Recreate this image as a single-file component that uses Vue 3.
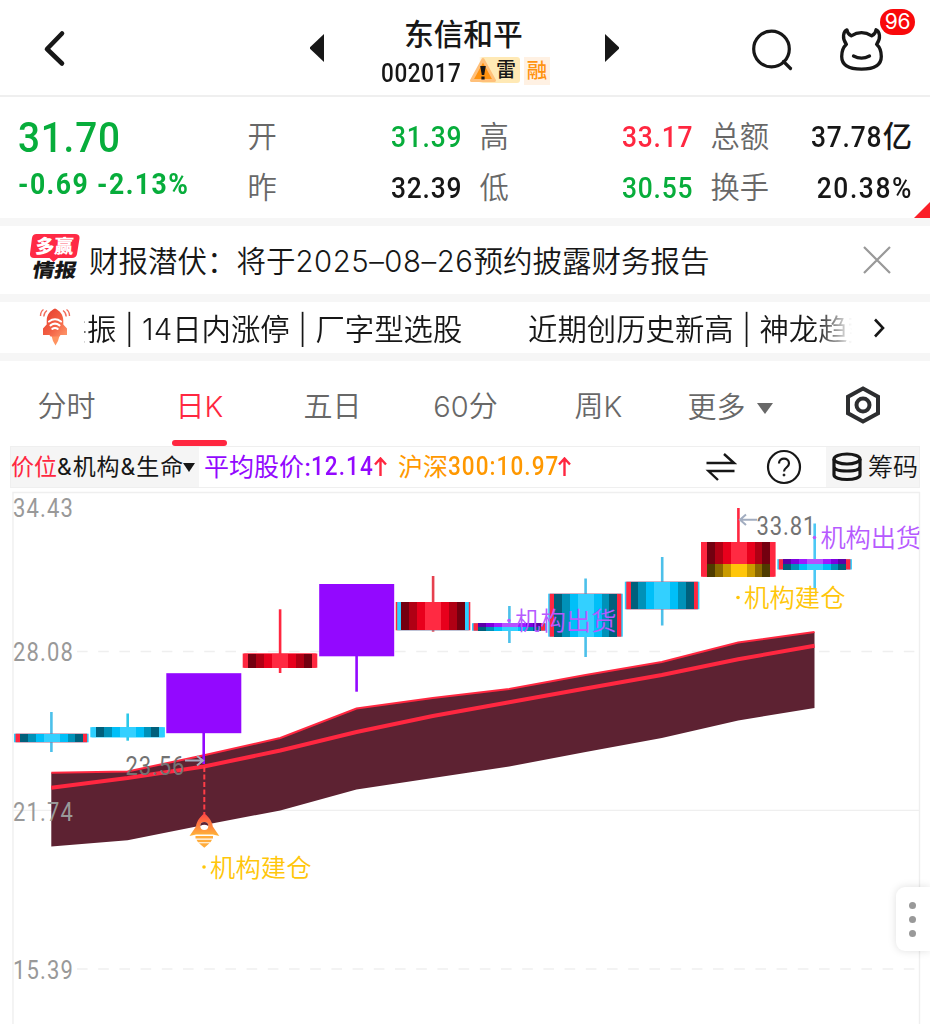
<script setup>
const periods = [
  { label: '分时' },
  { label: '日K', active: true },
  { label: '五日' },
  { label: '60分' },
  { label: '周K' },
]

const palettes = {
  blue: ['#00607c', '#0091b8', '#00bff8', '#33d0ff'],
  red: ['#730010', '#b00014', '#e8001c', '#ff2a42'],
  violet: ['#5c00a8', '#7e00e0', '#9d1cff', '#b650ff'],
  gold: ['#4e3b00', '#8a6900', '#c99b00', '#ffc60a'],
}
const RED = '#ff2740'
const CYAN = '#2ccfff'
const PURPLE = '#9308ff'

const raw = [
  { x: 14, top: 733.7, bot: 742.3, hi: 712, lo: 752, wick: '#4cc0ea', fill: 'blue', rim: CYAN, edge: RED },
  { x: 90.3, top: 727.2, bot: 737.3, hi: 713.5, lo: 740.7, wick: '#2cc8e8', fill: 'blue', rim: CYAN, edge: CYAN },
  { x: 166.3, top: 673.2, bot: 733.2, hi: 733, lo: 764, wick: PURPLE, solid: PURPLE },
  { x: 242.7, top: 653.5, bot: 667.8, hi: 609.3, lo: 673, wick: RED, fill: 'red', rim: RED, edge: RED },
  { x: 319.2, top: 584, bot: 656.3, hi: 656, lo: 691.7, wick: PURPLE, solid: PURPLE },
  { x: 395.7, top: 602, bot: 630.3, hi: 576, lo: 631.7, wick: '#e6404e', fill: 'red', rim: RED, edge: CYAN },
  { x: 472, top: 623.2, bot: 630.7, hi: 606, lo: 643, wick: '#4cc0ea', fill: 'blue', rim: CYAN, edge: RED, cap: 'violet', capTop: 623.2, capBot: 627.3 },
  { x: 548.2, top: 593.7, bot: 636.7, hi: 578.5, lo: 657, wick: '#4cc0ea', fill: 'blue', rim: CYAN, edge: RED },
  { x: 624.8, top: 581.7, bot: 609.3, hi: 557, lo: 625.5, wick: '#4cc0ea', fill: 'blue', rim: CYAN, edge: RED },
  { x: 701, top: 542, bot: 576.7, hi: 508, lo: 545, wick: RED, fill: 'red', rim: RED, edge: RED, cap: 'gold', capTop: 563.5, capBot: 576.7 },
  { x: 777.3, top: 559.2, bot: 569.5, hi: 523.5, lo: 588, wick: '#4cc8f5', fill: 'blue', rim: CYAN, edge: RED, cap: 'violet', capTop: 559.2, capBot: 564.3 },
]

const cuts = [5.7, 13.5, 21.5, 29.5, 45.5, 53.5, 61, 69]
const order = [0, 1, 2, 3, 2, 1, 0]
function stripes(x, name) {
  return order.map((tone, i) => ({ x: x + cuts[i], w: cuts[i + 1] - cuts[i], c: palettes[name][tone] }))
}
const candles = raw.map((c) => ({
  ...c,
  stripes: c.fill ? stripes(c.x, c.fill) : [],
  capStripes: c.cap ? stripes(c.x, c.cap) : [],
}))

const xs = [51.3, 127.6, 204, 280.3, 356.5, 432.8, 509.2, 585.6, 661.8, 738.2, 814.5]
const upper = [772.8, 771.5, 755.2, 738, 708.5, 698, 689, 675, 662, 642.5, 632]
const middle = [787.7, 778, 766.5, 750.5, 732, 716, 702.3, 688.5, 675, 659.3, 645.7]
const lower = [846.5, 840.3, 825, 810.5, 789.5, 778, 766.5, 752, 738, 720.5, 708]
const path = (ys) => xs.map((x, i) => `${x},${ys[i]}`)
const band = [...path(upper), ...path(lower).reverse()].join(' ')
const upperLine = path(upper).join(' ')
const middleLine = path(middle).join(' ')

const axis = [
  { t: '34.43', y: 517.3 },
  { t: '28.08', y: 661 },
  { t: '21.74', y: 820.5 },
  { t: '15.39', y: 978.5 },
]
const extremes = [
  { t: '23.56', x: 125.5, y: 775 },
  { t: '33.81', x: 756.5, y: 534.5 },
]
</script>

<template>
  <main class="screen">
    <header class="topbar">
      <svg class="back" width="24" height="40" viewBox="0 0 24 40"><path d="M20 5.500 5 21l15 14.500" /></svg>
      <svg class="prev" width="16" height="30" viewBox="0 0 16 30"><path d="M15 1v28L1 15.800v-1.600z" /></svg>
      <div class="title">
        <h1>东信和平</h1>
        <div class="codeline">
          <span class="code"><span class="din">002017</span></span>
          <span class="mine">
            <svg width="28" height="26" viewBox="0 0 28 26">
              <path d="M14 2.500 25.500 23.500H2.500z" fill="#ff9310" stroke="#ffc07a" stroke-width="3" stroke-linejoin="round" />
              <path d="M11.200 9h5.600l-1.600 9h-2.400z" fill="#161616" /><rect x="12.400" y="19.500" width="3.200" height="3" fill="#161616" />
            </svg><b>雷</b>
          </span>
          <span class="margin">融</span>
        </div>
      </div>
      <svg class="next" width="16" height="30" viewBox="0 0 16 30"><path d="M1 1v28l14-13.200v-1.600z" /></svg>
      <svg class="search" width="44" height="44" viewBox="0 0 44 44"><circle cx="20.500" cy="21" r="17.800" /><path d="m32.500 33.500 7 7" /></svg>
      <div class="mascot">
        <svg width="46" height="46" viewBox="0 0 46 46">
          <path d="M12.200 8.800C10 7.700 8.200 5.600 8 2.800 4.400 4.200 2.600 11.300 7.400 17.200 3.800 20.500 2.700 24.800 2.700 29.500 2.700 39 10 42.200 22.500 42.200S42.300 39 42.300 29.500C42.300 24.800 41.200 20.500 37.600 17.200 42.400 11.300 40.600 4.200 37 2.800 36.800 5.600 35 7.700 32.800 8.800 26 4.600 19 4.600 12.200 8.800z" />
          <path d="M14.500 29c5 2.600 11 2.600 16 0" />
        </svg>
        <span class="badge">96</span>
      </div>
    </header>

    <section class="quote">
      <div class="last">
        <strong><span class="din">31.70</span></strong>
        <p><span class="din">-0.69 -2.13%</span></p>
      </div>
      <dl>
        <div><dt>开</dt><dd class="down din">31.39</dd></div>
        <div><dt>昨</dt><dd class="din">32.39</dd></div>
      </dl>
      <dl>
        <div><dt>高</dt><dd class="up din">33.17</dd></div>
        <div><dt>低</dt><dd class="down din">30.55</dd></div>
      </dl>
      <dl>
        <div><dt>总额</dt><dd><span class="din">37.78</span><i>亿</i></dd></div>
        <div><dt>换手</dt><dd class="din wide">20.38%</dd></div>
      </dl>
      <i class="corner"></i>
    </section>

    <section class="news">
      <svg class="logo" width="52" height="50" viewBox="0 0 52 50">
        <path d="M7.500 2H46q5 0 4.500 4.500L48 22q-.8 4-5 4H29l-4.500 4-4-4H5q-4.500 0-4-4.500L3 6q.6-4 4.500-4z" fill="#ff2a45" />
        <text transform="translate(6 21) skewX(-4)" class="logotext light" textLength="38" lengthAdjust="spacingAndGlyphs">多赢</text>
        <text transform="translate(2.500 45) skewX(-10)" class="logotext dark" textLength="44" lengthAdjust="spacingAndGlyphs">情报</text>
      </svg>
      <p>财报潜伏：将于<span>2025–08–26</span>预约披露财务报告</p>
      <svg class="close" width="28" height="28" viewBox="0 0 28 28"><path d="m1 1 26 26M27 1 1 27" /></svg>
    </section>

    <section class="ticker">
      <svg class="rocket" width="32" height="40" viewBox="0 0 32 40">
        <defs><linearGradient id="hull" x1="0" y1="0" x2="1" y2="1"><stop offset="0" stop-color="#e53a2c" /><stop offset=".55" stop-color="#f25f43" /><stop offset="1" stop-color="#ff9a6c" /></linearGradient></defs>
        <path d="M12 27h9l-2 7-2.500 4.500L14 34z" fill="#ff9360" />
        <path d="M16 1.500c4.500 2 8.300 6 8.300 12v4l3.700 4V28h-6.500l-1 1.500h-9L10.500 28H4v-6.500l3.700-4v-4c0-6 3.800-10 8.300-12z" fill="url(#hull)" />
        <g fill="none" stroke="#fff" stroke-width="2.100" stroke-linecap="round"><path d="M10 14.500q6-4.500 12 0" /><path d="M11.500 18.300q4.500-3.300 9 0" /><path d="M13.300 21.800q2.700-1.700 5.400 0" /></g>
        <g fill="none" stroke="#f26d5c" stroke-width="1.400"><path d="M4.500 2.500Q1.500 4.500 1.500 9M8 3.500Q5 5.500 4.800 9.500M27.500 2.500q3 2 3 6.500M24 3.500q3 2 3.200 6" /></g>
      </svg>
      <div class="track">
        <span class="cut">共</span><span class="first">振 | 14日内涨停 | 厂字型选股</span><span class="second">近期创历史新高 | 神龙趋势</span>
      </div>
      <svg class="more" width="12" height="20" viewBox="0 0 12 20"><path d="m2 1.500 8 8.500-8 8.500" /></svg>
    </section>

    <nav class="tabs">
      <span v-for="p in periods" :key="p.label" class="tab" :class="{ active: p.active }">{{ p.label }}</span>
      <span class="dropdown">更多<i></i></span>
      <svg class="gear" width="36" height="40" viewBox="0 0 36 40">
        <path d="m18 3.500 15 8.300v16.400l-15 8.300-15-8.300V11.800z" /><circle cx="18" cy="20" r="6.500" />
      </svg>
    </nav>

    <section class="indicator">
      <div class="picker"><em>价位</em><span>&amp;机构&amp;生命</span><i></i></div>
      <div class="avg">平均股价:<span class="din">12.14</span><svg width="13" height="20" viewBox="0 0 13 20"><path d="M6.500 19V2M1 7.500l5.500-6 5.500 6" /></svg></div>
      <div class="hs">沪深<span class="din">300:10.97</span><svg width="13" height="20" viewBox="0 0 13 20"><path d="M6.500 19V2M1 7.500l5.500-6 5.500 6" /></svg></div>
      <svg class="swap" width="32" height="28" viewBox="0 0 32 28"><path d="M1.500 10H29L19 1M29.500 18H3.500l9.500 9" /></svg>
      <svg class="help" width="36" height="36" viewBox="0 0 36 36"><circle cx="18" cy="18" r="16" /><path d="M13 14.500c0-6.500 10-6.500 10 0 0 4-5 4-5 8" /><circle cx="18" cy="26" r="1" class="dot" /></svg>
      <div class="chips">
        <svg width="32" height="30" viewBox="0 0 32 30"><ellipse cx="16" cy="7" rx="13" ry="5" /><path d="M3 7v16c0 2.500 5.500 4.500 13 4.500s13-2 13-4.500V7M3 14.500C3 17.500 8 19 16 19s13-1.500 13-4.500" /></svg>
        <span>筹码</span>
      </div>
    </section>

    <svg class="chart" width="930" height="536" viewBox="0 488 930 536">
      <defs>
        <linearGradient id="flame" x1="0" y1="0" x2="0" y2="1"><stop offset="0" stop-color="#ff4545" /><stop offset="1" stop-color="#ffb638" /></linearGradient>
        <clipPath id="plot"><rect x="12" y="488" width="907.500" height="536" /></clipPath>
      </defs>
      <path d="M13 1024V492.500H919.500V1024" fill="none" stroke="#efefef" stroke-width="1.400" />
      <g stroke="#efefef" stroke-width="1.300">
        <path d="M77 651.500H919M77 969H919" stroke-dasharray="10.600 10.600" />
        <path d="M13 810.300H919" />
      </g>

      <polygon :points="band" fill="#5d2232" />
      <polyline :points="upperLine" fill="none" stroke="#ff2740" stroke-width="2" />
      <polyline :points="middleLine" fill="none" stroke="#ff2740" stroke-width="4" />
      <g class="scale">
        <text v-for="a in axis" :key="a.t" :transform="`translate(13 ${a.y}) scale(.88 1)`" textLength="68">{{ a.t }}</text>
      </g>

      <g v-for="c in candles" :key="c.x">
        <rect :x="c.x + 36.1" :y="c.hi" width="2.600" :height="c.lo - c.hi" :fill="c.wick" />
        <rect v-if="c.solid" :x="c.x" :y="c.top" width="75" :height="c.bot - c.top" :fill="c.solid" />
        <template v-else>
          <rect :x="c.x" :y="c.top" width="74.600" :height="c.bot - c.top" :fill="c.rim" />
          <rect :x="c.x + 1.5" :y="c.top" width="71.600" :height="c.bot - c.top" :fill="c.edge" />
          <g shape-rendering="crispEdges">
            <rect v-for="s in c.stripes" :key="s.x" :x="s.x" :y="c.top" :width="s.w" :height="c.bot - c.top" :fill="s.c" />
            <rect v-for="s in c.capStripes" :key="'c' + s.x" :x="s.x" :y="c.capTop" :width="s.w" :height="c.capBot - c.capTop" :fill="s.c" />
          </g>
        </template>
      </g>

      <g class="extreme">
        <text v-for="e in extremes" :key="e.t" :transform="`translate(${e.x} ${e.y}) scale(.88 1)`" textLength="67">{{ e.t }}</text>
      </g>
      <path d="M185 760.500h17M197 756l6 4.500-6 5" class="pointer" />
      <path d="M757 519.800h-17M746 514.500l-6 5.300 6 5.300" class="pointer" />

      <path d="M204.300 767v47" stroke="#ff3c46" stroke-width="2" stroke-dasharray="5 2.500" />
      <path d="M204.300 813.500c4 2.500 8 8 8.500 13l6.500 9.500-6.500-1.500H196l-6.500 1.500 6.500-9.500c.5-5 4.500-10.500 8.300-13z" fill="url(#flame)" />
      <path d="M195.500 836h17.500v2.500h-17.500zM196.500 839.700h15.500l-1.500 2.500h-12.500zM199 843.200h10.500l-5.200 4.500z" fill="#ffac3c" />
      <circle cx="204.300" cy="826" r="4" fill="#fff" /><path d="M200.300 826a4 4 0 0 1 8 0q-4-2.500-8 0z" fill="#5d2232" />

      <g class="signal" clip-path="url(#plot)">
        <circle cx="204" cy="867" r="1.800" fill="#ffc60a" /><text x="210" y="876.500" fill="#ffc60a" textLength="101.500">机构建仓</text>
        <circle cx="738" cy="597.500" r="1.800" fill="#ffc60a" /><text x="744" y="607" fill="#ffc60a" textLength="101.500">机构建仓</text>
        <circle cx="509" cy="620.500" r="1.800" fill="#b65aff" /><text x="515" y="630" fill="#b65aff" textLength="101.500">机构出货</text>
        <circle cx="814.500" cy="537.500" r="1.800" fill="#b65aff" /><text x="820.500" y="546.500" fill="#b65aff" textLength="100.500">机构出货</text>
      </g>
    </svg>

    <aside class="handle"><i></i><i></i><i></i></aside>
  </main>
</template>

<style>
body { background: #fff; overflow: hidden; }
</style>

<style scoped>
* { box-sizing: border-box; margin: 0; padding: 0; }
i, em { font-style: normal; }
svg { display: block; flex: none; }
.screen { position: relative; width: 930px; height: 1024px; overflow: hidden; background: #fff; color: #171717; font-family: Inter, "Noto Sans CJK SC", sans-serif; white-space: nowrap; }
.din { display: inline-block; font-family: Roboto, sans-serif; transform: scaleX(.9); transform-origin: 0 50%; }

.topbar { display: flex; align-items: center; height: 97px; border-bottom: 2px solid #efefef; }
.back { margin-left: 42px; fill: none; stroke: #171717; stroke-width: 4.6; stroke-linecap: round; stroke-linejoin: round; }
.prev { margin-left: 243px; fill: #171717; }
.title { width: 172px; margin-left: 55px; padding-top: 3px; }
h1 { width: 172px; height: 43px; line-height: 43px; padding-left: 24px; font-size: 29.7px; font-weight: 500; }
.codeline { display: flex; align-items: center; height: 30px; }
.code { width: 81px; margin: 6px 7px 0 1px; font: 500 25px/28px Roboto, sans-serif; letter-spacing: 0.7px; }
.mine { display: flex; align-items: center; width: 51px; height: 26px; margin-top: -1px; border-radius: 3px; background: linear-gradient(90deg, #fff 0 10px, #ffe9b5 14px); }
.mine b { font-size: 20px; line-height: 28px; font-weight: 500; margin-left: -1px; }
.margin { width: 26px; height: 28px; margin: 1px 0 0 4px; background: #fff1e3; color: #ff9310; font-size: 20.5px; line-height: 28px; font-weight: 500; text-align: center; }
.next { margin-left: 52px; fill: #171717; }
.search { margin: 4px 0 0 131px; fill: none; stroke: #171717; stroke-width: 3.2; stroke-linecap: round; }
.mascot { position: relative; margin: 4px 0 0 44px; }
.mascot svg { fill: none; stroke: #171717; stroke-width: 3.3; stroke-linecap: round; stroke-linejoin: round; }
.badge { position: absolute; left: 41px; top: -18px; width: 35px; height: 26px; border-radius: 13px; background: #f9090b; color: #fff; font: 400 21px/26px Inter, sans-serif; letter-spacing: -0.3px; text-align: center; }

.quote { position: relative; display: flex; height: 121px; }
.last { width: 229px; margin-left: 18px; color: #07ad3b; font-family: Roboto, sans-serif; }
.last strong { display: block; height: 60px; padding-top: 16px; font-size: 43px; line-height: 48px; font-weight: 500; letter-spacing: .9px; }
.last p { padding-top: 9px; font-size: 29.5px; line-height: 36px; font-weight: 700; letter-spacing: 1.6px; }
dl { width: 213px; margin: 0 19px 0 1px; padding-top: 15px; }
dl:nth-of-type(2) { width: 212px; margin-left: 0; }
dl:nth-of-type(3) { width: 201px; margin: 0; }
dl div { display: flex; justify-content: space-between; height: 50.5px; line-height: 50px; }
dt { margin-left: -.5px; color: #686868; font-size: 29.3px; font-weight: 350; }
dd { font: 500 29.3px/51px Roboto, "Noto Sans CJK SC", sans-serif; letter-spacing: .9px; }
dd.din { transform-origin: 100% 50%; margin-right: -1px; }
dd .din { transform-origin: 100% 50%; }
dd.wide { letter-spacing: 1.8px; }
dd i { letter-spacing: 0; }
.up { color: #ff2740; }
.down { color: #07ad3b; }
.corner { position: absolute; right: 0; bottom: 0; border: 8.5px solid transparent; border-right-color: #fb2029; border-bottom-color: #fb2029; }

.news { display: flex; align-items: center; height: 84px; border: solid #f6f6f6; border-width: 8px 0; }
.logo { margin: -6px 0 0 29px; }
.logotext { font-family: "Noto Sans CJK SC", sans-serif; font-weight: 900; }
.light { font-size: 19px; fill: #fff; }
.dark { font-size: 19px; fill: #171717; }
.news p { margin: -3px 0 0 8px; width: 622px; font-size: 29.5px; font-weight: 350; }
.news p span { font-size: 29.3px; letter-spacing: .55px; }
.close { margin-left: 152px; fill: none; stroke: #999; stroke-width: 2.2; }

.ticker { display: flex; align-items: center; height: 59px; border-bottom: 8px solid #f6f6f6; }
.rocket { margin: -1px 0 0 39px; }
.track { display: flex; width: 770px; height: 50px; margin-left: 13px; overflow: hidden; font-size: 29.4px; line-height: 53px; font-weight: 350; -webkit-mask-image: linear-gradient(90deg, #000 732px, transparent 768px); mask-image: linear-gradient(90deg, #000 732px, transparent 768px); }
.track span { flex: none; }
.cut { width: 3px; direction: rtl; overflow: hidden; opacity: .6; }
.first { width: 441px; }
.more { margin-left: 19px; fill: none; stroke: #171717; stroke-width: 2.6; }

.tabs { display: flex; height: 85px; color: #686868; font-size: 29px; font-weight: 350; line-height: 91px; }
.tab { position: relative; width: 133px; text-align: center; }
.active { color: #ff2740; }
.active::after { content: ""; position: absolute; left: 39px; bottom: 0; width: 55px; height: 6px; border-radius: 3px; background: #ff2740; }
.dropdown { display: flex; align-items: center; width: 180px; height: 94px; padding-left: 22.5px; line-height: 94px; }
.dropdown i { margin: 0 0 0 11px; border: 8.5px solid transparent; border-top: 11px solid #686868; border-bottom: 0; }
.gear { margin-top: 24px; fill: none; stroke: #2d2e30; stroke-width: 4; }

.indicator { display: flex; align-items: center; height: 42px; margin: 0 10px; border: 1.5px solid #efefef; font-size: 25px; line-height: 40px; }
.picker { display: flex; align-items: center; width: 188px; height: 40px; background: #f5f5f5; font-size: 23px; }
.picker em { color: #ff2740; }
.picker span { letter-spacing: .9px; }
.picker i { margin-left: -1px; border: 6px solid transparent; border-top: 9px solid #171717; border-bottom: 0; }
.avg, .hs { display: flex; align-items: center; }
.avg { width: 194px; padding-left: 5px; color: #9308ff; }
.hs { width: 220px; padding-left: 5px; color: #ff9800; }
.avg span, .hs span { font-weight: 500; letter-spacing: 1.2px; }
.avg span { margin-right: -7px; }
.hs span { margin-right: -14px; }
.avg svg, .hs svg { fill: none; stroke: #ff2740; stroke-width: 2.4; }
.swap { margin-left: 92px; fill: none; stroke: #171717; stroke-width: 2.4; stroke-linejoin: miter; }
.help { margin-left: 29px; fill: none; stroke: #171717; stroke-width: 2.2; }
.dot { fill: #171717; stroke-width: 1; }
.chips { display: flex; align-items: center; width: 93px; height: 40px; margin-left: auto; padding-left: 5px; background: #f5f5f5; font-weight: 350; }
.chips svg { fill: none; stroke: #171717; stroke-width: 3.2; }
.chips span { margin-left: 5px; }

.chart text { font-family: Roboto, "Noto Sans CJK SC", sans-serif; }
.chart .scale text { font-size: 25px; fill: #999; }
.chart .extreme text { font-size: 25px; fill: #737373; }
.chart .signal text { font-family: "Noto Sans CJK SC", sans-serif; font-size: 25.3px; font-weight: 350; }
.pointer { fill: none; stroke: #a2adc0; stroke-width: 2; }
.handle { position: absolute; right: 0; top: 887px; display: flex; flex-direction: column; align-items: center; justify-content: center; gap: 7px; width: 34px; height: 64px; padding-right: 1px; border-radius: 9px 0 0 9px; background: #fff; box-shadow: 0 0 9px rgba(0, 0, 0, .13); }
.handle i { width: 7px; height: 7px; border-radius: 50%; background: #999; }
</style>
